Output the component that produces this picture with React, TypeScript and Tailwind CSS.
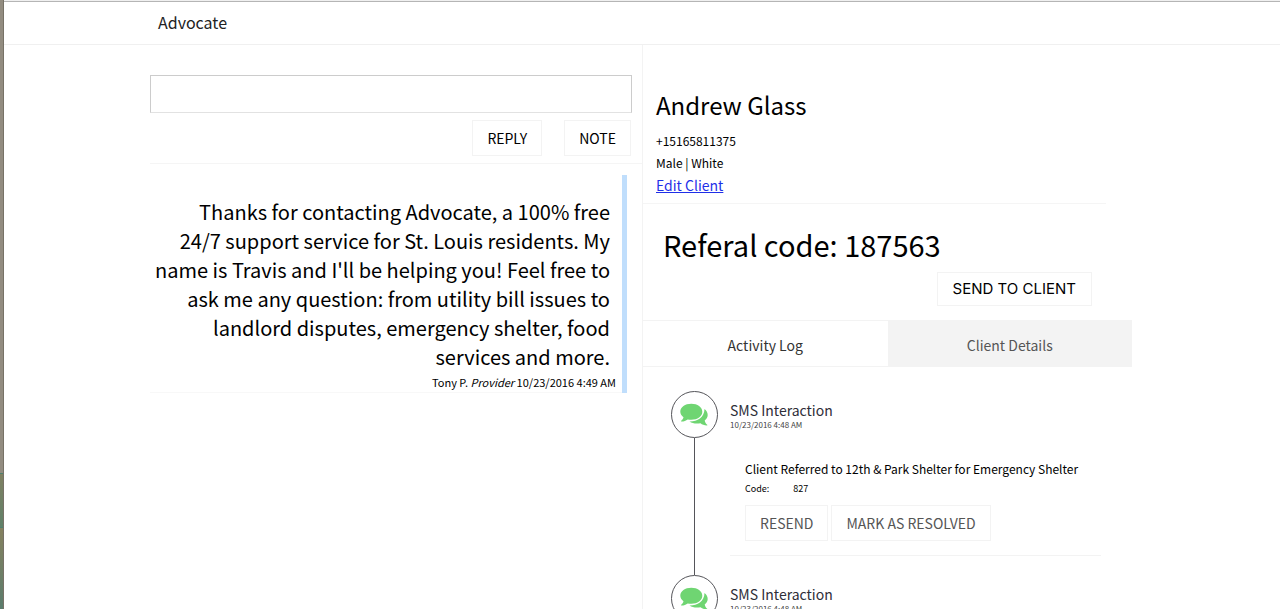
const messages = [
  {
    body: "Thanks for contacting Advocate, a 100% free\n24/7 support service for St. Louis residents. My name is Travis and I'll be helping you! Feel free to ask me any question: from utility bill issues to landlord disputes, emergency shelter, food services and more.",
    author: 'Tony P.',
    role: 'Provider',
    date: '10/23/2016 4:49 AM',
  },
];

const activities = [
  {
    title: 'SMS Interaction',
    date: '10/23/2016 4:48 AM',
    referral: 'Client Referred to 12th & Park Shelter for Emergency Shelter',
    code: '827',
  },
  { title: 'SMS Interaction', date: '10/23/2016 4:48 AM' },
];

function CommentsIcon() {
  return (
    <svg viewBox="0 0 28 23" className="w-7 h-6 fill-[#6fd572]" aria-hidden="true">
      <path d="M24.5 5.5c2.1 1.6 3.2 3.6 3.2 5.9 0 2.2-1.1 4.1-3 5.5.3 1.9 1.3 3.1 2.5 4.3.4.4.1.8-.4.8-2.5-.1-4.7-1-6.3-2.3-4.3.9-8.2.2-11-1.7 7.500.2 14.8-3.8 15-12.5z" />
      <path d="M11.3.3c6.2 0 11 3.5 11 8s-4.8 8-11 8c-1.3 0-2.5-.1-3.6-.4-1.7 1.3-3.8 2-6.1 2.1-.5 0-.8-.4-.4-.8 1.1-.9 2-2 2.3-3.4C1.5 12.3.3 10.4.3 8.3c0-4.5 4.8-8 11-8z" />
    </svg>
  );
}

function Messages() {
  return (
    <section className="pt-[30px]">
      <form className="pb-[7px] pr-[10px]">
        <input
          type="text"
          aria-label="Message"
          className="block w-full h-[38px] px-3 border border-[#ccc] border-b-[#e2e2e2] outline-none"
        />
        <div className="flex justify-end gap-[22px] mt-[7px] pr-px">
          <button type="button" className="h-9 px-[14px] border border-[#f3f3f3] text-sm leading-5">
            REPLY
          </button>
          <button type="button" className="h-9 px-[14px] border border-[#f3f3f3] text-sm leading-5">
            NOTE
          </button>
        </div>
      </form>

      <div className="pt-[11px] border-t border-[#f5f5f5]">
        {messages.map((message, idx) => (
          <article key={idx} className="mr-[15px] border-r-[5px] border-[#c0defc] text-right">
            <div className="pt-[22px] border-b border-[#f8f8f8]">
              <p className="pr-3 text-xl leading-[29px] whitespace-pre-line">{message.body}</p>
              <p className="pt-px pr-[6px] text-[11px] leading-5">
                {message.author} <em>{message.role}</em> {message.date}
              </p>
            </div>
          </article>
        ))}
      </div>
    </section>
  );
}

function Client() {
  return (
    <section className="border-l border-[#f3f3f3]">
      {/* Profile */}
      <div className="mr-[26px] pt-11 pb-[7px] pl-[13px] border-b border-[#f5f5f5]">
        <h1 className="text-2xl leading-8">Andrew Glass</h1>
        <p className="mt-[9px] text-xs leading-[22px]">+15165811375</p>
        <p className="text-xs leading-[22px]">Male | White</p>
        <a href="#edit" className="block w-fit text-sm leading-[22px] text-[#1f2fe8] underline">
          Edit Client
        </a>
      </div>

      {/* Referral */}
      <div className="pt-5 pb-[14px] pl-5 pr-10">
        <h2 className="text-[29px] leading-10">Referal code: 187563</h2>
        <div className="flex justify-end mt-2">
          <button
            type="button"
            className="h-[34px] px-[15px] border border-[#f3f3f3] font-['Inter',sans-serif] text-[15px]"
          >
            SEND TO CLIENT
          </button>
        </div>
      </div>

      <div role="tablist" className="flex h-[47px] border-y border-[#f3f3f3] text-sm">
        <button type="button" role="tab" aria-selected="true" className="w-1/2 pt-0.5 text-[#333]">
          Activity Log
        </button>
        <button
          type="button"
          role="tab"
          aria-selected="false"
          className="w-1/2 pt-0.5 bg-[#f3f3f3] text-[#555]"
        >
          Client Details
        </button>
      </div>

      {/* Activity log */}
      <ol className="pt-6 pl-7 pr-[31px]">
        {activities.map((activity, idx) => (
          <li key={idx} className="flex gap-3">
            <div className="flex flex-col items-center">
              <div className="flex shrink-0 items-center justify-center size-[47px] pr-0.5 rounded-full border border-[#55555a]">
                <CommentsIcon />
              </div>
              <div className="w-px grow bg-[#55555a]" />
            </div>
            <div className="grow pt-[9px] pb-[19px]">
              <h3 className="text-sm leading-5 text-[#2e2e38]">{activity.title}</h3>
              <p className="text-[8px] leading-[10px] text-[#444]">{activity.date}</p>
              {activity.referral && (
                <div className="pt-[29px] pl-[15px] pb-[14px] border-b border-[#f3f3f3]">
                  <p className="text-xs leading-5">{activity.referral}</p>
                  <dl className="flex gap-6 text-[9px] leading-5">
                    <dt>Code:</dt>
                    <dd>{activity.code}</dd>
                  </dl>
                  <div className="flex gap-[3px] mt-[6px] text-sm leading-5 text-[#555]">
                    <button type="button" className="h-9 px-[14px] border border-[#f3f3f3]">
                      RESEND
                    </button>
                    <button type="button" className="h-9 px-[14px] border border-[#f3f3f3]">
                      MARK AS RESOLVED
                    </button>
                  </div>
                </div>
              )}
            </div>
          </li>
        ))}
      </ol>
    </section>
  );
}

export default function App() {
  return (
    <div className="flex h-screen overflow-hidden bg-white font-['Noto_Sans_CJK_SC',sans-serif] text-black">
      {/* Desktop edge beside the window */}
      <div className="flex flex-col w-1 shrink-0 border-r border-[#777267]">
        <div className="grow bg-[#928c80]" />
        <div className="h-[54px] border-t border-[#4d8070] bg-linear-to-b from-[#7f8062] to-[#5f8068]" />
        <div className="h-[82px] border-t border-[#4d8070] bg-linear-to-b from-[#85815f] to-[#5a7c6c]" />
      </div>

      <div className="flex flex-col grow min-w-0 border-t border-[#f0f0f0]">
        <header className="shrink-0 border-t border-b border-t-[#b5b5b5] border-b-[#f0f0f0] pr-0.5">
          <div className="max-w-[982px] mx-auto px-2 pt-[9px] pb-[11px] text-base leading-[22px] text-[#222]">
            Advocate
          </div>
        </header>
        <main className="grow min-h-0 overflow-y-auto [scrollbar-width:none] pr-0.5">
          <div className="grid grid-cols-[492fr_490fr] min-h-full max-w-[982px] mx-auto">
            <Messages />
            <Client />
          </div>
        </main>
      </div>
    </div>
  );
}
